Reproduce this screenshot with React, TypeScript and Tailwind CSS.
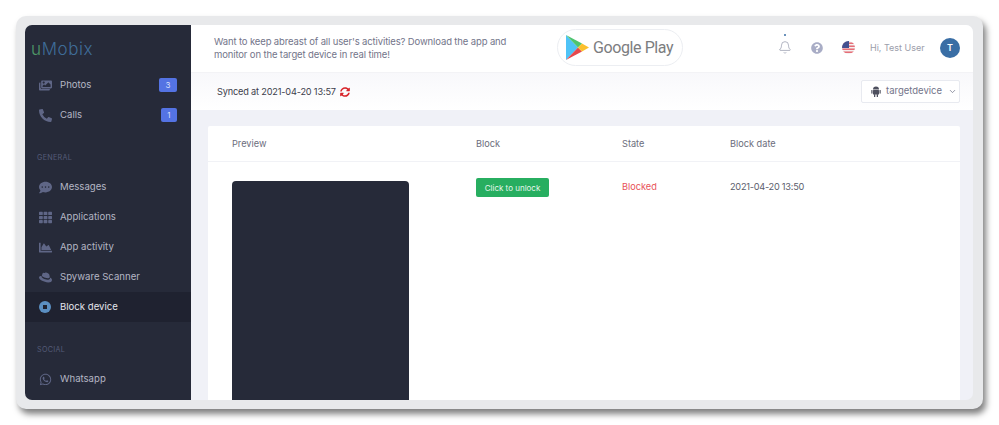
import { Bell, ChevronDown } from "lucide-react";
import type { ReactNode } from "react";
import {
  FaChartArea,
  FaCommentDots,
  FaImages,
  FaPhoneAlt,
  FaQuestionCircle,
  FaRedhat,
  FaSyncAlt,
  FaTh,
  FaWhatsapp,
} from "react-icons/fa";

const font = { fontFamily: "Inter, 'Open Sans', sans-serif" };

function NavItem({
  icon,
  label,
  badge,
  active,
}: {
  icon: ReactNode;
  label: string;
  badge?: string;
  active?: boolean;
}) {
  return (
    <div
      className={`flex h-[30px] items-center px-[14px] ${
        active ? "bg-[#1f2230] text-[#e4e5ec]" : "text-[#b4b6c4]"
      }`}
    >
      <span
        className={`flex w-[21px] shrink-0 items-center text-[13px] ${
          active ? "text-[#5b8fc2]" : "text-[#5f6686]"
        }`}
      >
        {icon}
      </span>
      <span className="pt-[1px] text-[9.6px]">{label}</span>
      {badge && (
        <span className="ml-auto flex h-[14px] items-center justify-center rounded-[2px] bg-[#5473e3] px-[6.5px] text-[8px] text-[#d8e0fb]">
          {badge}
        </span>
      )}
    </div>
  );
}

function SectionLabel({ children }: { children: string }) {
  return (
    <div className="mb-[10px] mt-[22px] pl-[12px] pt-[1px] text-[7.2px] leading-[9px] tracking-[0.3px] text-[#555b78]">
      {children}
    </div>
  );
}

function Sidebar() {
  return (
    <aside className="flex w-[166px] shrink-0 flex-col bg-[#262a39]">
      <div className="h-[45px] pl-[6px] pt-[12px] text-[17px] font-light leading-[24px] tracking-[0.6px] text-[#3f6c98]">
        <span className="text-[#4f9a68]">u</span>Mobix
      </div>
      <NavItem icon={<FaImages />} label="Photos" badge="3" />
      <NavItem icon={<FaPhoneAlt />} label="Calls" badge="1" />
      <SectionLabel>GENERAL</SectionLabel>
      <NavItem icon={<FaCommentDots />} label="Messages" />
      <NavItem icon={<FaTh />} label="Applications" />
      <NavItem icon={<FaChartArea />} label="App activity" />
      <NavItem icon={<FaRedhat />} label="Spyware Scanner" />
      <NavItem
        active
        icon={
          <span className="flex h-[12px] w-[12px] items-center justify-center rounded-full bg-[#5b8fc2]">
            <span className="h-[4px] w-[4px] bg-[#1f2230]" />
          </span>
        }
        label="Block device"
      />
      <SectionLabel>SOCIAL</SectionLabel>
      <NavItem icon={<FaWhatsapp />} label="Whatsapp" />
    </aside>
  );
}

function PlayLogo() {
  return (
    <svg width="23" height="25" viewBox="0 0 23 25">
      <polygon points="0,0 0,25 12,12.5" fill="#4fc3f7" />
      <polygon points="0,0 12,12.5 16,8.5" fill="#4dc46f" />
      <polygon points="0,25 12,12.5 16,16.5" fill="#e5484d" />
      <polygon points="16,8.5 23,12.5 16,16.5 12,12.5" fill="#fbc02d" />
    </svg>
  );
}

function AndroidIcon() {
  return (
    <svg width="10" height="11" viewBox="0 0 10 11" className="mr-[5px] shrink-0" fill="#4e505e">
      <path d="M2 3.4a3 3 0 0 1 6 0z" />
      <rect x="2" y="3.9" width="6" height="4.6" rx="0.5" />
      <rect x="0.3" y="3.9" width="1.2" height="3.8" rx="0.6" />
      <rect x="8.5" y="3.9" width="1.2" height="3.8" rx="0.6" />
      <rect x="3" y="8" width="1.3" height="3" rx="0.6" />
      <rect x="5.7" y="8" width="1.3" height="3" rx="0.6" />
    </svg>
  );
}

function Flag() {
  return (
    <svg width="13" height="13" viewBox="0 0 13 13" className="block">
      <clipPath id="flag-clip">
        <circle cx="6.5" cy="6.5" r="6.5" />
      </clipPath>
      <g clipPath="url(#flag-clip)">
        <rect width="13" height="13" fill="#f4f1f1" />
        <rect y="1.5" width="13" height="1.4" fill="#e4606a" />
        <rect y="4.5" width="13" height="1.4" fill="#e4606a" />
        <rect y="7.5" width="13" height="1.4" fill="#e4606a" />
        <rect y="10.5" width="13" height="1.4" fill="#e4606a" />
        <rect width="7" height="7" fill="#43508f" />
      </g>
    </svg>
  );
}

function TopBar() {
  return (
    <header className="flex h-[47px] shrink-0 items-center bg-white pb-[2px] pl-[23px] pr-[13px]">
      <p className="w-[343px] shrink-0 text-[9.5px] leading-[13px] tracking-[-0.13px] text-[#73758a]">
        Want to keep abreast of all user's activities? Download the app and
        <br />
        monitor on the target device in real time!
      </p>
      <div className="flex h-[37px] w-[126px] shrink-0 items-center gap-[4px] rounded-full border border-[#eceef2] pl-[8px]">
        <PlayLogo />
        <span
          className="text-[16px] tracking-[-0.4px] text-[#7c7d80]"
          style={{ fontFamily: "Roboto, sans-serif" }}
        >
          Google Play
        </span>
      </div>
      <div className="relative ml-[95px] flex w-[14px] justify-center text-[#9a9eb0]">
        <span className="absolute -top-[6px] h-[2px] w-[2px] rounded-full bg-[#3a6ea5]" />
        <Bell size={15} strokeWidth={1.3} />
      </div>
      <FaQuestionCircle className="ml-[19px] text-[12px] text-[#a9adc6]" />
      <div className="ml-[19px]">
        <Flag />
      </div>
      <span className="ml-[15px] text-[9px] text-[#9b9daa]">Hi, Test User</span>
      <span className="ml-auto flex h-[20px] w-[20px] items-center justify-center rounded-full bg-[#3a6ea5] text-[9px] font-semibold text-white">
        T
      </span>
    </header>
  );
}

function SyncBar() {
  return (
    <div className="flex h-[37px] shrink-0 items-center bg-gradient-to-b from-[#f8f8fb] to-white pl-[26px] pr-[13px]">
      <span className="text-[9.2px] tracking-[-0.18px] text-[#3c3e4c]">Synced at 2021-04-20 13:57</span>
      <FaSyncAlt className="ml-[4px] text-[10px] text-[#d8252b]" />
      <div className="ml-auto flex h-[23px] w-[99px] items-center rounded-[2px] border border-[#e8eaf0] bg-white pl-[9px] text-[9.5px] text-[#73758a]">
        <AndroidIcon />
        targetdevice
        <ChevronDown size={9} className="ml-[6px]" />
      </div>
    </div>
  );
}

function BlockTable() {
  return (
    <section className="flex min-h-0 flex-1 flex-col overflow-hidden rounded-t-[2px] bg-white">
      <div className="grid h-[36px] shrink-0 grid-cols-[244px_146px_108px_1fr] items-center border-b border-[#f1f2f6] pl-[24px] text-[9.2px] text-[#6b6d7c]">
        <span>Preview</span>
        <span>Block</span>
        <span>State</span>
        <span>Block date</span>
      </div>
      <div className="grid min-h-0 flex-1 grid-cols-[244px_146px_108px_1fr] pl-[24px]">
        <div className="mt-[19px] h-full w-[177px] rounded-t-[4px] bg-[#262a39]" />
        <div className="pt-[16px]">
          <button className="flex h-[19px] w-[73px] items-center justify-center rounded-[2px] bg-[#27ae60] text-[8px] text-[#e6f6ec]">
            Click to unlock
          </button>
        </div>
        <span className="pt-[18px] text-[9.2px] leading-[13px] text-[#e8525a]">Blocked</span>
        <span className="pt-[18px] text-[9.2px] leading-[13px] tracking-[-0.25px] text-[#5b5d6c]">2021-04-20 13:50</span>
      </div>
    </section>
  );
}

export default function App() {
  return (
    <div className="h-[425px] w-[999px] overflow-hidden bg-white p-4" style={font}>
      <div className="h-[393px] w-[967px] rounded-[10px] bg-[#e8e9eb] py-[9px] pl-[9px] pr-[10px] shadow-[3px_5px_6px_rgba(0,0,0,0.5)]">
        <div className="flex h-full overflow-hidden rounded-[7px]">
          <Sidebar />
          <main className="flex min-w-0 flex-1 flex-col bg-[#f0f1f7]">
            <TopBar />
            <div className="h-px shrink-0 bg-[#f3f3f6]" />
            <SyncBar />
            <div className="flex min-h-0 flex-1 pl-[17px] pr-[13px] pt-[16px]">
              <BlockTable />
            </div>
          </main>
        </div>
      </div>
    </div>
  );
}
